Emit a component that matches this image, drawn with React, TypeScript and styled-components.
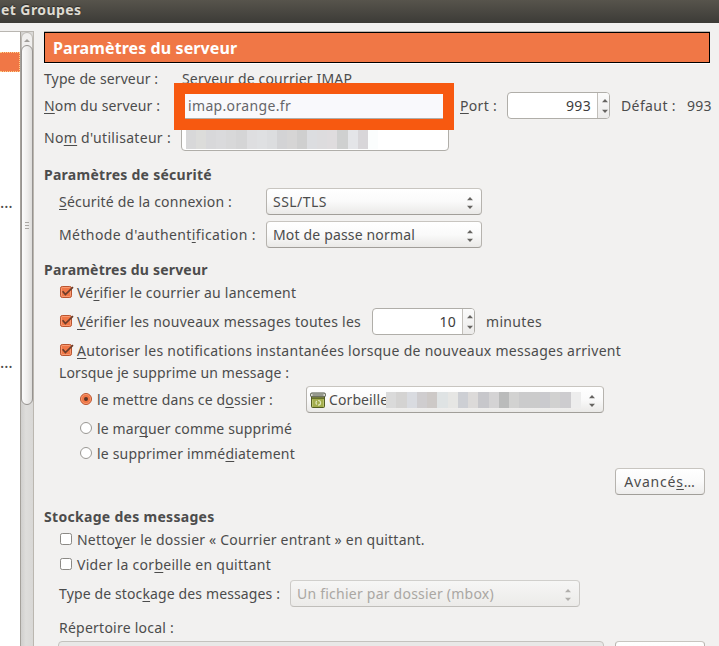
import React from 'react';
import styled, { createGlobalStyle, css } from 'styled-components';

const GlobalStyle = createGlobalStyle`
  * { box-sizing: border-box; }
  html, body { margin: 0; padding: 0; overflow: hidden; background: #f2f1f0; }
  body { font: 14px/20px "Noto Sans", "Open Sans", sans-serif; color: #4c4c4c; }
`;

const Window = styled.div`
  display: flex;
  flex-direction: column;
  width: 719px;
  height: 646px;
  overflow: hidden;
  background: #f2f1f0;
`;

const TitleBar = styled.header`
  flex: none;
  height: 23px;
  padding: 0 1px;
  background: linear-gradient(#57544c, #3c3b37);
  color: #dfdbd2;
  font-weight: 700;
  line-height: 20px;
  letter-spacing: 0.42px;
  text-shadow: 0 -1px 1px #2c2b28;
`;

const Body = styled.div`
  display: flex;
  flex: 1;
  min-height: 0;
`;

const Sidebar = styled.aside`
  display: flex;
  width: 34px;
  margin-top: 8px;
  border-top: 1px solid #b9b6b1;
`;

const Tree = styled.div`
  display: flex;
  flex-direction: column;
  width: 20px;
  padding-top: 20px;
  background: #fff;
`;

const TreeRow = styled.div<{ $selected?: boolean; $gap?: number }>`
  flex: none;
  height: 20px;
  margin-top: ${(p) => p.$gap ?? 0}px;
  font-size: 16px;
  ${(p) =>
    p.$selected &&
    css`
      background: #f07746;
      border: 1px dotted #ffd08a;
      border-left: 0;
    `}
`;

const Scrollbar = styled.div`
  display: flex;
  flex-direction: column;
  width: 14px;
  background: linear-gradient(90deg, #d0cfcd, #dedddb 40%, #d9d8d6);
  border-left: 1px solid #a5a19b;
  border-right: 1px solid #bbb7b0;
`;

const ScrollUp = styled.div`
  display: flex;
  flex: none;
  align-items: center;
  justify-content: center;
  height: 18px;
  margin-bottom: -5px;
  padding-bottom: 2px;
  border: 1px solid #bcb9b4;
  border-radius: 6px 6px 0 0;
  background: #f0efee;
`;

const Thumb = styled.div`
  display: flex;
  flex: none;
  flex-direction: column;
  align-items: center;
  justify-content: center;
  gap: 2px;
  height: 360px;
  border: 1px solid #969390;
  border-radius: 6px;
  background: linear-gradient(90deg, #fbfbfb, #eeedec 55%, #dddcda);
`;

const GripLine = styled.span`
  width: 4px;
  height: 1px;
  background: #aaa7a3;
`;

const Panel = styled.main`
  display: flex;
  flex: 1;
  flex-direction: column;
  min-width: 0;
  padding: 8px 9px 0 10px;
`;

const PanelTitle = styled.h1`
  flex: none;
  height: 33px;
  margin: 0 0 2px;
  border-top: 1px solid #b9b6b1;
  border-bottom: 1px solid #fff;
`;

const PanelTitleFill = styled.div`
  height: 31px;
  padding-left: 8px;
  border: 1px solid #000;
  background: #f07746;
  color: #fff;
  font-size: 16px;
  font-weight: 700;
  line-height: 31px;
  letter-spacing: 0.09px;
`;

const Row = styled.div<{ $h?: number; $gap?: number; $indent?: number }>`
  display: flex;
  flex: none;
  align-items: center;
  height: ${(p) => p.$h ?? 20}px;
  margin-top: ${(p) => p.$gap ?? 0}px;
  padding-left: ${(p) => p.$indent ?? 0}px;
`;

const Label = styled.span<{ $w?: number; $ls?: number; $indent?: number }>`
  flex: none;
  width: ${(p) => (p.$w ? `${p.$w}px` : 'auto')};
  padding-left: ${(p) => p.$indent ?? 0}px;
  letter-spacing: ${(p) => p.$ls ?? 0.2}px;
  white-space: nowrap;
`;

const Section = styled.h2<{ $gap: number; $ls: number }>`
  flex: none;
  height: 20px;
  margin: ${(p) => p.$gap}px 0 0;
  font-size: 14px;
  font-weight: 700;
  line-height: 20px;
  letter-spacing: ${(p) => p.$ls}px;
`;

const Key = styled.span`
  text-decoration: underline;
  text-decoration-thickness: 1px;
  text-decoration-skip-ink: none;
  text-underline-offset: 2px;
`;

const frame = css`
  display: flex;
  flex: none;
  align-items: center;
  height: 27px;
  margin-bottom: 1px;
  border: 1px solid #b0aea9;
  border-radius: 4px;
`;

const Field = styled.div<{ $w: number; $tinted?: boolean }>`
  ${frame}
  position: relative;
  width: ${(p) => p.$w}px;
  padding-left: 5px;
  background: ${(p) => (p.$tinted ? '#f9f9fc' : '#fff')};
  color: #66666a;
`;

const Highlight = styled.div`
  position: absolute;
  z-index: 1;
  top: -10px;
  left: -8px;
  width: 280px;
  height: 47px;
  border: 11px solid #f75910;
`;

const Spin = styled.div`
  ${frame}
  width: 103px;
  background: #fff;
  color: #3c3c3c;
`;

const SpinValue = styled.span`
  flex: 1;
  padding-right: 6px;
  text-align: right;
  letter-spacing: 0.3px;
`;

const SpinButtons = styled.span`
  display: flex;
  align-items: center;
  width: 12px;
  height: 25px;
  padding: 1px 0 0 4px;
  border-left: 1px solid #c2bfba;
  border-radius: 0 3px 3px 0;
  background: linear-gradient(#fbfbfb, #ecebea);
`;

const Select = styled.div<{ $w: number; $disabled?: boolean }>`
  ${frame}
  width: ${(p) => p.$w}px;
  padding: 0 8px 0 6px;
  border-color: ${(p) => (p.$disabled ? '#d0cfcc #cbc9c6 #c0beba' : '#c8c5c0 #b6b3ae #a19e99')};
  background: ${(p) =>
    p.$disabled ? 'linear-gradient(#f6f6f5, #ecebe9)' : 'linear-gradient(#fff, #fafafa 50%, #eae9e7)'};
  color: ${(p) => (p.$disabled ? '#aaa7a3' : '#4c4c4c')};
`;

const SelectArrows = styled.span`
  display: flex;
  margin: 3px 0 0 auto;
`;

const FolderSelect = styled(Select)`
  padding-left: 3px;
  gap: 3px;
`;

const FolderName = styled.span`
  flex: none;
  width: 57px;
  white-space: nowrap;
  letter-spacing: 0.1px;
`;

const Button = styled.button`
  ${frame}
  justify-content: center;
  width: 90px;
  margin-left: auto;
  margin-right: 5px;
  padding: 0;
  border-color: #c8c5c0 #b6b3ae #a19e99;
  background: linear-gradient(#fff, #fafafa 50%, #eeedec);
  color: inherit;
  font: inherit;
`;

const PathField = styled.div`
  ${frame}
  width: 546px;
  border-color: #c4c2be;
  background: #e9e8e7;
`;

const Redacted = styled.span<{ $h: number; $pull?: number }>`
  position: relative;
  display: flex;
  flex: none;
  height: ${(p) => p.$h}px;
  margin-left: ${(p) => p.$pull ?? 0}px;
`;

const Tile = styled.i<{ $c: string; $w: number }>`
  width: ${(p) => p.$w}px;
  background: ${(p) => p.$c};
`;

const Mark = styled.span`
  display: flex;
  flex: none;
  width: 12px;
  height: 12px;
  margin: 0 5px 2px 0;

  svg { display: block; overflow: visible; }
`;

const Arrows = ({ color = '#666461' }: { color?: string }) => (
  <svg width="6" height="12" viewBox="0 0 6 12" fill={color}>
    <path d="M0 3.2 3 0l3 3.2zM0 8.8h6L3 12z" />
  </svg>
);

const SpinArrows = () => (
  <svg width="6" height="14" viewBox="0 0 6 14" fill="#666461">
    <path d="M0 3.2 3 0l3 3.2zM0 10.8h6L3 14z" />
  </svg>
);

const Check = ({ on }: { on?: boolean }) => (
  <Mark>
    <svg width="12" height="12" viewBox="0 0 12 12">
      <rect x=".5" y=".5" width="11" height="11" rx="1.8" fill={on ? '#f07746' : '#fff'} stroke={on ? '#b9542f' : '#8b8985'} />
      {on && <rect x="1.5" y="1.5" width="9" height="9" rx="1" fill="none" stroke="#f9a37e" strokeWidth=".8" />}
      {on && <path d="M2.6 5.2 5.4 8.6 13 1.200" fill="none" stroke="#6b3c2a" strokeWidth="1.7" />}
    </svg>
  </Mark>
);

const Radio = ({ on }: { on?: boolean }) => (
  <Mark>
    <svg width="12" height="12" viewBox="0 0 12 12">
      <circle cx="6" cy="6" r="5.5" fill={on ? '#f07746' : '#fff'} stroke={on ? '#b9542f' : '#9a9894'} />
      {on && <circle cx="6" cy="6" r="4.6" fill="none" stroke="#f9a37e" strokeWidth=".7" />}
      {on && <circle cx="6" cy="6" r="2" fill="#5c3526" />}
    </svg>
  </Mark>
);

const TrashIcon = () => (
  <svg width="16" height="16" viewBox="0 0 16 16">
    <path d="M1.500 4.500h13v10a1 1 0 0 1-1 1h-11a1 1 0 0 1-1-1z" fill="#a3ad4d" stroke="#525c22" />
    <path d="M2 5.500h12v1.500H2z" fill="#66712b" />
    <path d="M2.500 7.500v7M13.500 7.500v7" stroke="#c3cc79" strokeWidth=".8" />
    <rect x=".5" y="1" width="15" height="3.800" rx="1.400" fill="#d9dad2" stroke="#4d5242" />
    <path d="M2.500 3h11" stroke="#6c7062" strokeWidth="1.200" />
    <circle cx="8.300" cy="10.800" r="2.300" fill="none" stroke="#e3e8bd" strokeWidth="1.200" strokeDasharray="3.500 1.300" />
  </svg>
);

const Mosaic = ({ colors, size, h, pull }: { colors: string[]; size: number; h: number; pull?: number }) => (
  <Redacted $h={h} $pull={pull}>
    {colors.map((c, i) => (
      <Tile key={i} $c={c} $w={size} />
    ))}
  </Redacted>
);

const userTiles = ['#d8d8d9', '#dcdcda', '#d8d8da', '#dadadc', '#d8d8d9', '#d5d5d6', '#dedee0', '#dfe0e2', '#dcdddf', '#d3d3d5', '#d6d5d5', '#cfcfcf', '#dcdde0', '#dddcde', '#dfdcde', '#cfd0d0', '#e4e5e8', '#d8d6d9', '#fbfdfd'];
const folderTiles = ['#dadada', '#d4d3d2', '#d9dbe0', '#cfcdcf', '#cdc9c7', '#dfe3e4', '#e6e6e4', '#cdcfd4', '#dcdad9', '#c7c7cb', '#d4d3d4', '#babbbb', '#d2d2d1', '#cbcbcc', '#cbcbcb', '#cacace', '#d1d1d0', '#cdcccf', '#ededed'];

export default function App() {
  return (
    <Window>
      <GlobalStyle />
      <TitleBar>et Groupes</TitleBar>
      <Body>
        <Sidebar>
          <Tree>
            <TreeRow $selected />
            <TreeRow $gap={120}>…</TreeRow>
            <TreeRow $gap={140}>…</TreeRow>
          </Tree>
          <Scrollbar>
            <ScrollUp>
              <svg width="6" height="3" viewBox="0 0 6 3"><path d="M0 3 3 0l3 3z" fill="#a09d99" /></svg>
            </ScrollUp>
            <Thumb><GripLine /><GripLine /><GripLine /></Thumb>
          </Scrollbar>
        </Sidebar>
        <Panel>
          <PanelTitle><PanelTitleFill>Paramètres du serveur</PanelTitleFill></PanelTitle>

          <Row $h={26}>
            <Label $w={138} $ls={0.12}>Type de serveur :</Label>
            <Label $ls={0.18}>Serveur de courrier IMAP</Label>
          </Row>
          <Row $h={28}>
            <Label $w={137} $ls={0.13}><Key>N</Key>om du serveur :</Label>
            <Field $w={268} $tinted>
              <Label $ls={0.34} $indent={1}>imap.orange.fr</Label>
              <Highlight />
            </Field>
            <Row $h={28} $indent={11}>
              <Label $w={47} $ls={0.31}><Key>P</Key>ort :</Label>
              <Spin><SpinValue>993</SpinValue><SpinButtons><SpinArrows /></SpinButtons></Spin>
            </Row>
            <Row $h={28} $indent={11}>
              <Label $w={66} $ls={0.39}>Défaut :</Label>
              <Label $ls={0.3}>993</Label>
            </Row>
          </Row>
          <Row $h={28} $gap={4}>
            <Label $w={137} $ls={0.31}>No<Key>m</Key> d'utilisateur :</Label>
            <Field $w={268}><Mosaic colors={userTiles} size={10.1} h={23} pull={-1} /></Field>
          </Row>

          <Section $gap={13} $ls={0.27}>Paramètres de sécurité</Section>
          <Row $h={28} $gap={3} $indent={15}>
            <Label $w={207} $ls={0.2}><Key>S</Key>écurité de la connexion :</Label>
            <Select $w={216}><Label $ls={0.47}>SSL/TLS</Label><SelectArrows><Arrows /></SelectArrows></Select>
          </Row>
          <Row $h={28} $gap={5} $indent={15}>
            <Label $w={207} $ls={0.4}>Méthode d'authent<Key>i</Key>fication :</Label>
            <Select $w={216}><Label $ls={0.16}>Mot de passe normal</Label><SelectArrows><Arrows /></SelectArrows></Select>
          </Row>

          <Section $gap={11} $ls={0.2}>Paramètres du serveur</Section>
          <Row $gap={3} $indent={16}>
            <Check on /><Label $ls={0.21}>Vé<Key>r</Key>ifier le courrier au lancement</Label>
          </Row>
          <Row $h={28} $gap={5} $indent={16}>
            <Check on /><Label $w={295} $ls={0.24}><Key>V</Key>érifier les nouveaux messages toutes les</Label>
            <Spin><SpinValue>10</SpinValue><SpinButtons><SpinArrows /></SpinButtons></Spin>
            <Row $indent={11}><Label $ls={0.33}>minutes</Label></Row>
          </Row>
          <Row $gap={5} $indent={16}>
            <Check on /><Label $ls={0.28}><Key>A</Key>utoriser les notifications instantanées lorsque de nouveaux messages arrivent</Label>
          </Row>
          <Row $gap={2} $indent={15}><Label $ls={0.13}>Lorsque je supprime un message :</Label></Row>
          <Row $h={28} $gap={3} $indent={36}>
            <Radio on /><Label $w={209} $ls={0.14}>le mettre dans ce d<Key>o</Key>ssier :</Label>
            <FolderSelect $w={298}>
              <TrashIcon /><FolderName>Corbeille</FolderName>
              <Mosaic colors={folderTiles} size={10.25} h={16} pull={-3} />
              <SelectArrows><Arrows /></SelectArrows>
            </FolderSelect>
          </Row>
          <Row $gap={5} $indent={36}><Radio /><Label $ls={0.12}>le mar<Key>q</Key>uer comme supprimé</Label></Row>
          <Row $gap={5} $indent={36}><Radio /><Label $ls={0.19}>le supprimer immé<Key>d</Key>iatement</Label></Row>
          <Row $h={28} $gap={4}><Button><Label $ls={0.8}>Avancé<Key>s</Key>…</Label></Button></Row>

          <Section $gap={11} $ls={0.3}>Stockage des messages</Section>
          <Row $gap={3} $indent={16}>
            <Check /><Label $ls={0.21}>Netto<Key>y</Key>er le dossier « Courrier entrant » en quittant.</Label>
          </Row>
          <Row $gap={5} $indent={16}><Check /><Label $ls={0.28}>Vider la cor<Key>b</Key>eille en quittant</Label></Row>
          <Row $h={28} $gap={5} $indent={15}>
            <Label $w={231} $ls={0.13}>Type de stoc<Key>k</Key>age des messages :</Label>
            <Select $w={290} $disabled>
              <Label $ls={0.23}>Un fichier par dossier (mbox)</Label>
              <SelectArrows><Arrows color="#b0aeab" /></SelectArrows>
            </Select>
          </Row>
          <Row $gap={10} $indent={15}><Label $ls={0.24}>Répertoire local :</Label></Row>
          <Row $h={28} $gap={3} $indent={14}><PathField /><Button /></Row>
        </Panel>
      </Body>
    </Window>
  );
}
